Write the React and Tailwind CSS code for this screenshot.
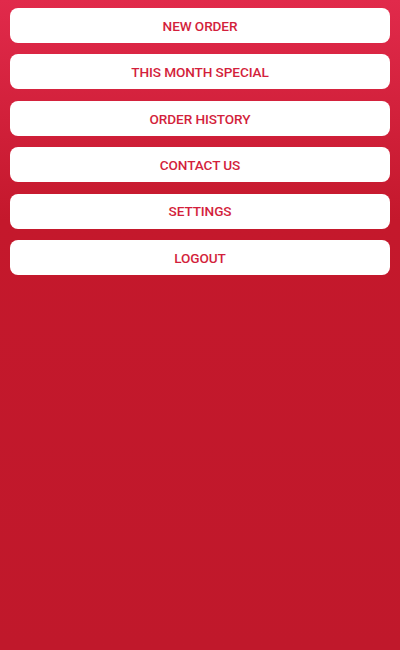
import React from 'react';

const items = ['NEW ORDER', 'THIS MONTH SPECIAL', 'ORDER HISTORY', 'CONTACT US', 'SETTINGS', 'LOGOUT'];

export default function App() {
  return (
    <div
      className="w-[400px] h-[650px] bg-[linear-gradient(to_bottom,#e12a4b_0px,#c4182c_220px,#c0182b_650px)] px-[10px] pt-[8px] flex flex-col gap-[11.4px]"
      style={{ fontFamily: 'Roboto, "Liberation Sans", sans-serif' }}
    >
      {items.map((label) => (
        <button
          key={label}
          className="h-[35px] w-full bg-white rounded-[8px] text-[#d31f3c] text-[13.6px] font-medium tracking-[-0.1px] pt-[1px] flex items-center justify-center"
        >
          {label}
        </button>
      ))}
    </div>
  );
}
